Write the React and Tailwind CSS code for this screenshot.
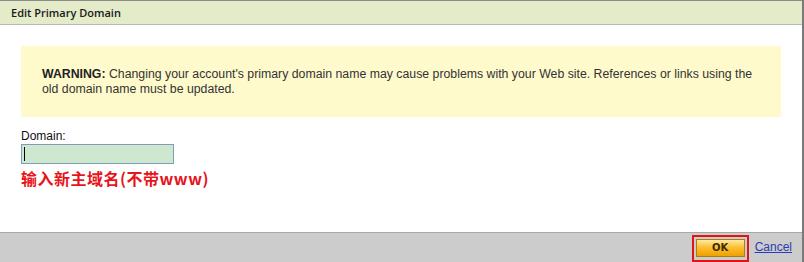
export default function App() {
  return (
    <div className="w-[804px] h-[262px] flex flex-col bg-white border-r-2 border-[#7a7a7a] overflow-hidden font-['Liberation_Sans',Arial,sans-serif] text-[12px] text-[#222]">
      {/* Title bar */}
      <div className="h-[25px] shrink-0 border-t border-b border-t-[#8c8c8c] border-b-[#b8b8b8] bg-[#e3ebc9] flex items-center pl-[11px]">
        <span className="font-['Open_Sans',sans-serif] font-semibold text-[11px] text-[#1a1a1a] leading-none">Edit Primary Domain</span>
      </div>

      {/* Body */}
      <div className="flex-1 px-[21px] pt-[21px]">
        <div className="bg-[#fffacc] pl-[21px] pr-[21px] pt-[21px] pb-[20px] text-[12.3px] leading-[15px] text-[#333]">
          <span className="font-bold text-[#222]">WARNING:</span> Changing your account's primary domain name may cause problems with your Web site. References or links using the old domain name must be updated.
        </div>

        <div className="mt-[12px] leading-[14px] text-[#111]">Domain:</div>
        <div className="mt-[1px] w-[153px] h-[20px] border border-[#7f9db9] bg-[#cde8cf] flex items-center pl-[2px]">
          <span className="w-px h-[14px] bg-black" />
        </div>
        <div className="mt-[4px] font-['Noto_Sans_CJK_SC',sans-serif] font-bold text-[16px] leading-[20px] tracking-[0.5px] text-[#e8141b]">
          输入新主域名(不带www)
        </div>
      </div>

      {/* Footer */}
      <div className="h-[30px] shrink-0 border-t border-[#a8a8a8] bg-[#cccccc] flex items-end justify-end pr-[10px]">
        <div className="h-[27px] border-2 border-[#e0141b] px-[2px] pt-[2px] mr-[6px] self-end">
          <button className="w-[49px] h-[18px] border border-[#b07c10] bg-[linear-gradient(#ffe9a0,#fcc033_45%,#f0a000)] text-[#3a2a00] font-['DejaVu_Sans',sans-serif] font-bold text-[10px] leading-none flex items-center justify-center">
            OK
          </button>
        </div>
        <a href="#" className="self-center mb-[1px] text-[#2a3cb0] underline text-[12px]">Cancel</a>
      </div>
    </div>
  );
}
